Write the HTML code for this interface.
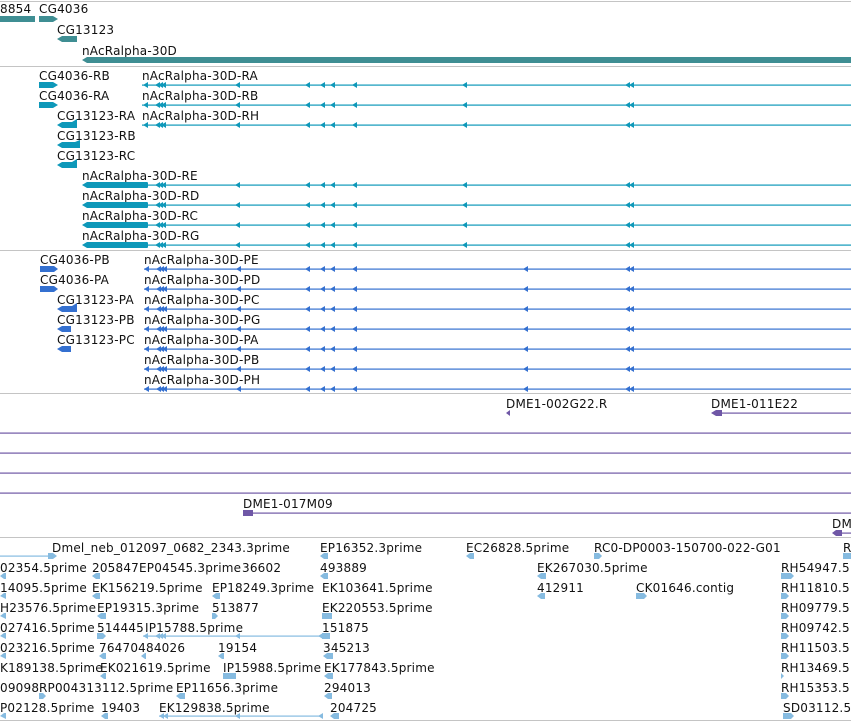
<!DOCTYPE html>
<html><head><meta charset="utf-8"><style>
html,body{margin:0;padding:0;background:#fff;width:851px;height:722px;overflow:hidden}
svg{display:block}
text{font-family:"DejaVu Sans","Liberation Sans",sans-serif;font-size:12px;fill:#111;letter-spacing:0.2px}
</style></head><body>
<svg width="851" height="722" viewBox="0 0 851 722" xmlns="http://www.w3.org/2000/svg">
<defs>
<polygon id="la" points="0,3 5,0 5,6"/>
<polygon id="ra" points="5,3 0,0 0,6"/>
<g id="arrC"><use href="#la" x="143" y="-3"/><use href="#la" x="155" y="-3"/><use href="#la" x="158" y="-3"/><use href="#la" x="161" y="-3"/><use href="#la" x="235" y="-3"/><use href="#la" x="305" y="-3"/><use href="#la" x="320" y="-3"/><use href="#la" x="330" y="-3"/><use href="#la" x="352" y="-3"/><use href="#la" x="462" y="-3"/><use href="#la" x="625" y="-3"/><use href="#la" x="629" y="-3"/></g>
<g id="arrP"><use href="#la" x="144" y="-3"/><use href="#la" x="156" y="-3"/><use href="#la" x="159" y="-3"/><use href="#la" x="162" y="-3"/><use href="#la" x="236" y="-3"/><use href="#la" x="305" y="-3"/><use href="#la" x="320" y="-3"/><use href="#la" x="330" y="-3"/><use href="#la" x="352" y="-3"/><use href="#la" x="523" y="-3"/><use href="#la" x="625" y="-3"/><use href="#la" x="629" y="-3"/></g>
</defs>
<g fill="#c4c4c4">
<rect x="0" y="1" width="851" height="1"/>
<rect x="0" y="66" width="851" height="1"/>
<rect x="0" y="250" width="851" height="1"/>
<rect x="0" y="393" width="851" height="1"/>
<rect x="0" y="537" width="851" height="1"/>
<rect x="0" y="720" width="851" height="1"/>
</g>
<text x="0" y="13">8854</text><text x="39" y="13">CG4036</text>
<text x="57" y="34">CG13123</text>
<text x="82" y="55">nAcRalpha-30D</text>
<g fill="#3f8e93">
<rect x="0" y="16" width="35" height="6"/>
<polygon points="39,16 53,16 58,19 53,22 39,22"/>
<polygon points="57,39 62,36 77,36 77,42 62,42"/>
<polygon points="82,60 87,57 851,57 851,63 87,63"/>
</g>
<g>
<text x="39" y="80">CG4036-RB</text><text x="142" y="80">nAcRalpha-30D-RA</text>
<text x="39" y="100">CG4036-RA</text><text x="142" y="100">nAcRalpha-30D-RB</text>
<text x="57" y="120">CG13123-RA</text><text x="142" y="120">nAcRalpha-30D-RH</text>
<text x="57" y="140">CG13123-RB</text>
<text x="57" y="160">CG13123-RC</text>
<text x="82" y="180">nAcRalpha-30D-RE</text>
<text x="82" y="200">nAcRalpha-30D-RD</text>
<text x="82" y="220">nAcRalpha-30D-RC</text>
<text x="82" y="240">nAcRalpha-30D-RG</text>
</g>
<g fill="#0e98b9">
<polygon points="39,82 53,82 58,85 53,88 39,88"/>
<polygon points="39,102 53,102 58,105 53,108 39,108"/>
<polygon points="57,125 62,122 72,122 77,119 77,128 72,128 62,128"/>
<polygon points="57,145 62,142 75,142 80,140 80,148 75,148 62,148"/>
<polygon points="57,165 62,162 72,162 77,159 77,168 72,168 62,168"/>
<rect x="142" y="84.5" width="709" height="1.2"/><use href="#arrC" y="85"/>
<rect x="142" y="104.5" width="709" height="1.2"/><use href="#arrC" y="105"/>
<rect x="142" y="124.5" width="709" height="1.2"/><use href="#arrC" y="125"/>
<polygon points="82,185 87,182 147,182 147,188 87,188"/><rect x="147" y="184.5" width="704" height="1.2"/><use href="#arrC" y="185"/>
<polygon points="82,205 87,202 147,202 147,208 87,208"/><rect x="147" y="204.5" width="704" height="1.2"/><use href="#arrC" y="205"/>
<polygon points="82,225 87,222 147,222 147,228 87,228"/><rect x="147" y="224.5" width="704" height="1.2"/><use href="#arrC" y="225"/>
<polygon points="82,245 87,242 147,242 147,248 87,248"/><rect x="147" y="244.5" width="704" height="1.2"/><use href="#arrC" y="245"/>
</g>
<g>
<text x="40" y="264">CG4036-PB</text><text x="144" y="264">nAcRalpha-30D-PE</text>
<text x="40" y="284">CG4036-PA</text><text x="144" y="284">nAcRalpha-30D-PD</text>
<text x="57" y="304">CG13123-PA</text><text x="144" y="304">nAcRalpha-30D-PC</text>
<text x="57" y="324">CG13123-PB</text><text x="144" y="324">nAcRalpha-30D-PG</text>
<text x="57" y="344">CG13123-PC</text><text x="144" y="344">nAcRalpha-30D-PA</text>
<text x="144" y="364">nAcRalpha-30D-PB</text>
<text x="144" y="384">nAcRalpha-30D-PH</text>
</g>
<g fill="#3470d0">
<polygon points="40,266 54,266 58,269 54,272 40,272"/>
<polygon points="40,286 54,286 58,289 54,292 40,292"/>
<polygon points="57,309 62,306 72,306 77,303 77,312 72,312 62,312"/>
<polygon points="57,329 62,326 71,326 71,332 62,332"/>
<polygon points="57,349 62,346 71,346 71,352 62,352"/>
<rect x="144" y="268.5" width="707" height="1.2"/><use href="#arrP" y="269"/>
<rect x="144" y="288.5" width="707" height="1.2"/><use href="#arrP" y="289"/>
<rect x="144" y="308.5" width="707" height="1.2"/><use href="#arrP" y="309"/>
<rect x="144" y="328.5" width="707" height="1.2"/><use href="#arrP" y="329"/>
<rect x="144" y="348.5" width="707" height="1.2"/><use href="#arrP" y="349"/>
<rect x="144" y="368.5" width="707" height="1.2"/><use href="#arrP" y="369"/>
<rect x="144" y="388.5" width="707" height="1.2"/><use href="#arrP" y="389"/>
</g>
<text x="506" y="408">DME1-002G22.R</text>
<text x="711" y="408">DME1-011E22</text>
<text x="243" y="508">DME1-017M09</text>
<text x="832" y="528">DM</text>
<g fill="#6f57a6">
<polygon points="506,413 510,410 510,416"/>
<polygon points="711,413 716,410 722,410 722,416 716,416"/><rect x="722" y="412.5" width="129" height="1.2"/>
<rect x="0" y="432.5" width="851" height="1.2"/>
<rect x="0" y="452.5" width="851" height="1.2"/>
<rect x="0" y="472.5" width="851" height="1.2"/>
<rect x="0" y="492.5" width="851" height="1.2"/>
<rect x="243" y="510" width="10" height="6"/><rect x="253" y="512.5" width="598" height="1.2"/>
<polygon points="832,533 836,530 842,530 842,536 836,536"/><rect x="842" y="532.5" width="9" height="1.2"/>
</g>
<g>
<text x="52" y="552">Dmel_neb_012097_0682_2343.3prime</text><text x="320" y="552">EP16352.3prime</text><text x="466" y="552">EC26828.5prime</text><text x="594" y="552">RC0-DP0003-150700-022-G01</text><text x="843" y="552">R</text>
<text x="0" y="572">02354.5prime</text><text x="92" y="572">205847</text><text x="139" y="572">EP04545.3prime</text><text x="242" y="572">36602</text><text x="320" y="572">493889</text><text x="537" y="572">EK267030.5prime</text><text x="781" y="572">RH54947.5</text>
<text x="0" y="592">14095.5prime</text><text x="92" y="592">EK156219.5prime</text><text x="212" y="592">EP18249.3prime</text><text x="322" y="592">EK103641.5prime</text><text x="537" y="592">412911</text><text x="636" y="592">CK01646.contig</text><text x="781" y="592">RH11810.5</text>
<text x="0" y="612">H23576.5prime</text><text x="97" y="612">EP19315.3prime</text><text x="212" y="612">513877</text><text x="322" y="612">EK220553.5prime</text><text x="781" y="612">RH09779.5</text>
<text x="0" y="632">027416.5prime</text><text x="97" y="632">514445</text><text x="145" y="632">IP15788.5prime</text><text x="322" y="632">151875</text><text x="781" y="632">RH09742.5</text>
<text x="0" y="652">023216.5prime</text><text x="99" y="652">76470484026</text><text x="218" y="652">19154</text><text x="323" y="652">345213</text><text x="781" y="652">RH11503.5</text>
<text x="0" y="672">K189138.5prime</text><text x="100" y="672">EK021619.5prime</text><text x="223" y="672">IP15988.5prime</text><text x="324" y="672">EK177843.5prime</text><text x="781" y="672">RH13469.5</text>
<text x="0" y="692">09098</text><text x="39" y="692">RP004313112.5prime</text><text x="176" y="692">EP11656.3prime</text><text x="324" y="692">294013</text><text x="781" y="692">RH15353.5</text>
<text x="0" y="712">P02128.5prime</text><text x="101" y="712">19403</text><text x="159" y="712">EK129838.5prime</text><text x="330" y="712">204725</text><text x="783" y="712">SD03112.5</text>
</g>
<g fill="#86bbe0">
<rect x="0" y="555.5" width="50" height="1.2"/><polygon points="48,553 53,553 57,556 53,559 48,559"/>
<polygon points="320,556 324,553 328,553 328,559 324,559"/>
<polygon points="466,556 470,553 474,553 474,559 470,559"/>
<polygon points="594,553 599,553 602,556 599,559 594,559"/>
<rect x="843" y="553" width="8" height="6"/>
<polygon points="0,576 4,573 6,573 6,579 4,579"/><polygon points="92,576 96,573 100,573 100,579 96,579"/><polygon points="320,576 324,573 328,573 328,579 324,579"/><polygon points="537,576 541,573 546,573 546,579 541,579"/><polygon points="781,573 791,573 794,576 791,579 781,579"/>
<polygon points="92,596 96,593 100,593 100,599 96,599"/><polygon points="212,596 216,593 220,593 220,599 216,599"/><polygon points="537,596 541,593 545,593 545,599 541,599"/><polygon points="636,593 644,593 647,596 644,599 636,599"/><polygon points="781,593 786,593 789,596 786,599 781,599"/><polygon points="0,596 4,593 6,593 6,599"/>
<polygon points="97,616 101,613 106,613 106,619 101,619"/><polygon points="212,613 215,613 218,616 215,619 212,619"/><rect x="322" y="613" width="10" height="6"/><polygon points="781,613 786,613 789,616 786,619 781,619"/><polygon points="0,616 4,613 6,613 6,619"/>
<polygon points="97,633 103,633 106,636 103,639 97,639"/><rect x="143" y="635.5" width="187" height="1.2"/><use href="#la" x="143" y="633"/><use href="#la" x="155" y="633"/><use href="#la" x="158" y="633"/><use href="#la" x="161" y="633"/><use href="#la" x="235" y="633"/><use href="#la" x="318" y="633"/><use href="#la" x="322" y="633"/><rect x="322" y="633" width="8" height="6"/><polygon points="781,633 786,633 789,636 786,639 781,639"/><polygon points="0,636 4,633 6,633 6,639"/>
<polygon points="99,656 103,653 106,653 106,659 103,659"/><polygon points="141,656 145,653 146,653 146,659 145,659"/><polygon points="218,656 222,653 224,653 224,659 222,659"/><polygon points="323,656 327,653 333,653 333,659 327,659"/><polygon points="781,653 786,653 789,656 786,659 781,659"/><polygon points="0,656 4,653 6,653 6,659"/>
<polygon points="100,676 104,673 106,673 106,679 104,679"/><rect x="223" y="673" width="13" height="6"/><polygon points="324,676 328,673 333,673 333,679 328,679"/><polygon points="781,673 784,676 781,679"/>
<polygon points="39,693 43,693 46,696 43,699 39,699"/><polygon points="176,696 180,693 185,693 185,699 180,699"/><polygon points="324,696 328,693 332,693 332,699 328,699"/><polygon points="781,693 786,693 789,696 786,699 781,699"/>
<polygon points="0,716 4,713 6,713 6,719"/><polygon points="101,716 105,713 108,713 108,719 105,719"/><rect x="159" y="715.5" width="164" height="1.2"/><use href="#la" x="159" y="713"/><use href="#la" x="163" y="713"/><use href="#la" x="235" y="713"/><use href="#la" x="318" y="713"/><polygon points="330,716 334,713 339,713 339,719 334,719"/><polygon points="783,713 791,713 794,716 791,719 783,719"/>
</g>
</svg>
</body></html>
